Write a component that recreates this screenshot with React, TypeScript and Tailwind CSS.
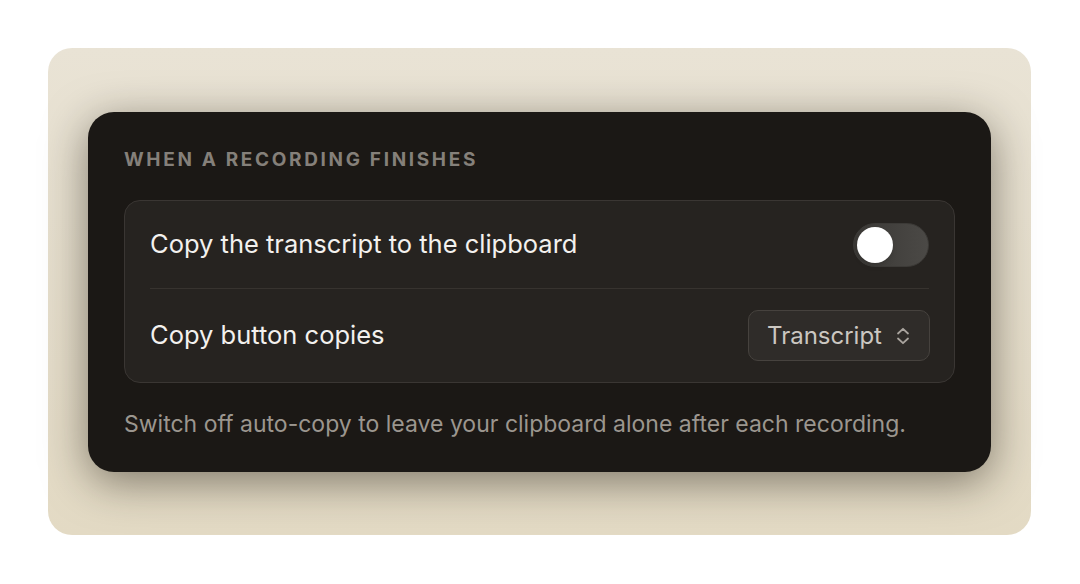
import React, { useState } from 'react';

/**
 * Recording settings card - "When a recording finishes"
 */
const Toggle: React.FC<{ on: boolean; onChange: (v: boolean) => void }> = ({ on, onChange }) => (
  <button
    onClick={() => onChange(!on)}
    className={`relative w-[76px] h-[44px] rounded-full border border-[#3c3a37] transition-colors ${
      on ? 'bg-[#3b82f6]' : 'bg-gradient-to-r from-[#3a3835] to-[#4b4946]'
    }`}
  >
    <span
      className={`absolute top-[3px] w-[36px] h-[36px] rounded-full bg-white shadow-md transition-all ${
        on ? 'left-[35px]' : 'left-[3px]'
      }`}
    />
  </button>
);

const ChevronUpDown = () => (
  <svg width="14" height="18" viewBox="0 0 14 18" fill="none" stroke="#a9a49e" strokeWidth="1.8" strokeLinecap="round" strokeLinejoin="round">
    <path d="M2 6.5 7 1.8l5 4.7" />
    <path d="M2 11.5 7 16.2l5-4.7" />
  </svg>
);

export default function App() {
  const [autoCopy, setAutoCopy] = useState(false);

  return (
    <div className="min-h-screen bg-white p-12" style={{ fontFamily: 'Inter, "Noto Sans", sans-serif' }}>
      <div className="w-[983px] rounded-[24px] bg-gradient-to-b from-[#e9e3d5] to-[#e3dac4] px-10 pt-16 pb-[63px]">
        <div className="h-[360px] rounded-[26px] bg-[#1b1815] px-9 pt-9 shadow-[0_10px_44px_rgba(30,24,14,0.5)]">
          <h3 className="text-[19px] leading-6 font-bold tracking-[0.14em] text-[#85807a] mb-7">
            WHEN A RECORDING FINISHES
          </h3>

          <div className="rounded-[16px] border border-[#3a3633] bg-[#262320]">
            <div className="h-[87px] flex items-center justify-between pl-[25px] pr-[25px]">
              <span className="text-[25.5px] text-[#f3f1ee]">Copy the transcript to the clipboard</span>
              <Toggle on={autoCopy} onChange={setAutoCopy} />
            </div>
            <div className="mx-[25px] h-px bg-[#37332f]" />
            <div className="h-[93px] flex items-center justify-between pl-[25px] pr-[24px]">
              <span className="text-[25.5px] text-[#f3f1ee]">Copy button copies</span>
              <button className="h-[51px] w-[182px] flex items-center justify-between pl-[18px] pr-[19px] rounded-[10px] border border-[#46423e] bg-[#2f2c29] text-[24px] text-[#cbc7c1]">
                Transcript
                <ChevronUpDown />
              </button>
            </div>
          </div>

          <p className="mt-[27px] text-[23px] leading-7 text-[#9b968f]">
            Switch off auto-copy to leave your clipboard alone after each recording.
          </p>
        </div>
      </div>
    </div>
  );
}
